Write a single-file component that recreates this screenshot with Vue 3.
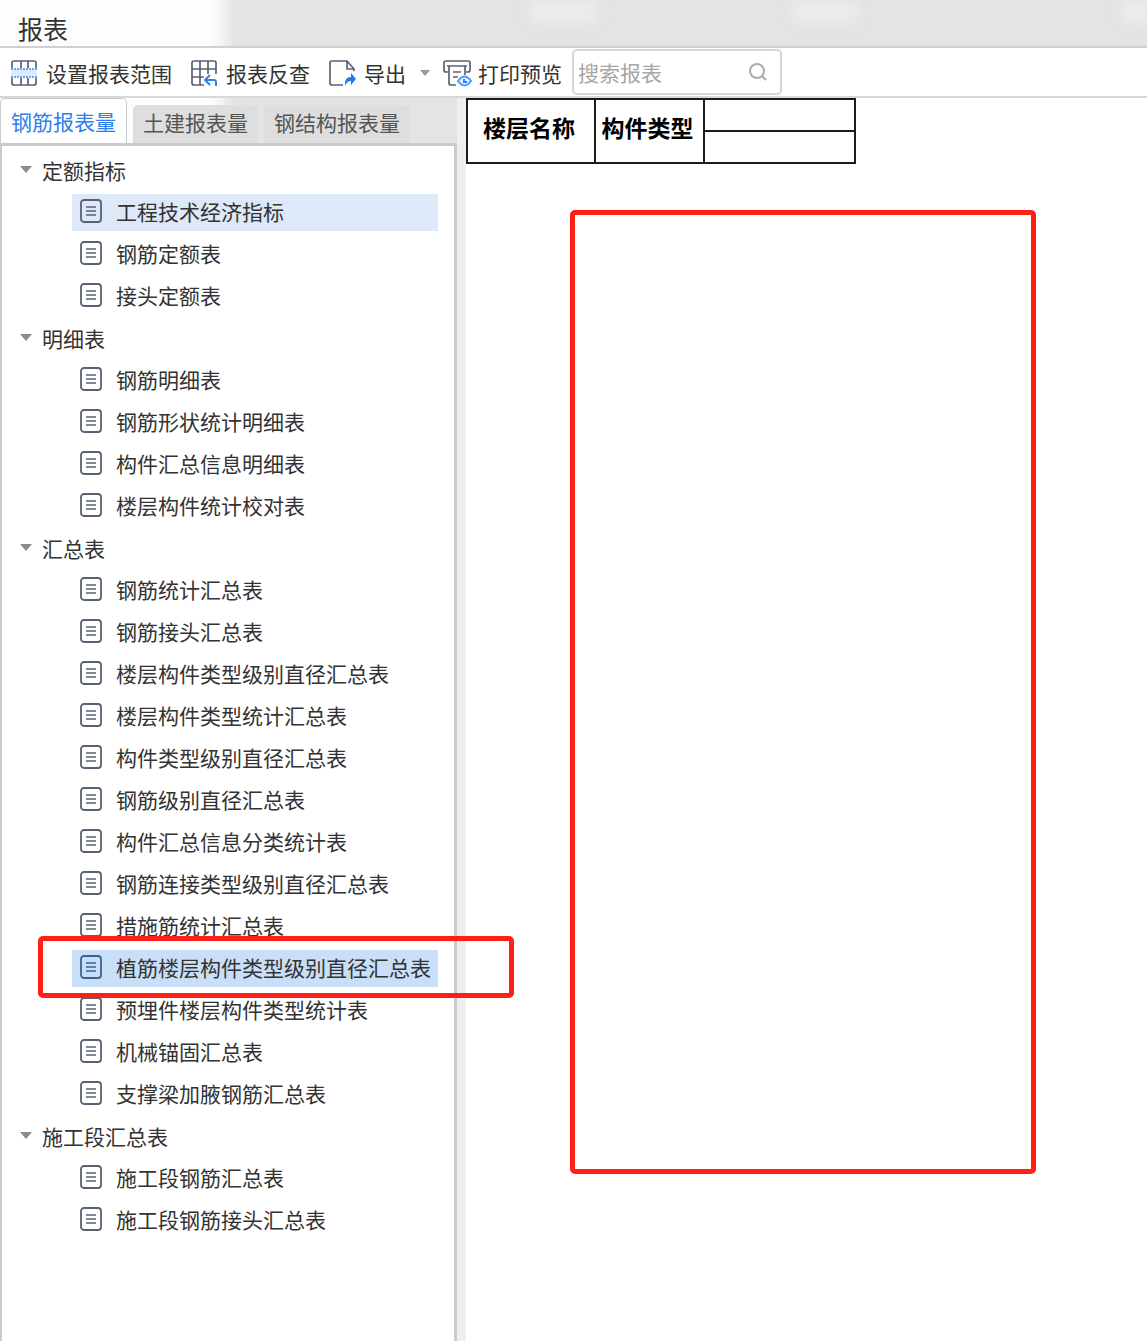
<script setup>
import { ref } from 'vue'

const tabs = ['钢筋报表量', '土建报表量', '钢结构报表量']
const activeTab = ref('钢筋报表量')
const hovered = '工程技术经济指标'
const selected = ref('植筋楼层构件类型级别直径汇总表')
const keyword = ref('')

const groups = [
  { name: '定额指标', items: ['工程技术经济指标', '钢筋定额表', '接头定额表'] },
  { name: '明细表', items: ['钢筋明细表', '钢筋形状统计明细表', '构件汇总信息明细表', '楼层构件统计校对表'] },
  {
    name: '汇总表',
    items: [
      '钢筋统计汇总表',
      '钢筋接头汇总表',
      '楼层构件类型级别直径汇总表',
      '楼层构件类型统计汇总表',
      '构件类型级别直径汇总表',
      '钢筋级别直径汇总表',
      '构件汇总信息分类统计表',
      '钢筋连接类型级别直径汇总表',
      '措施筋统计汇总表',
      '植筋楼层构件类型级别直径汇总表',
      '预埋件楼层构件类型统计表',
      '机械锚固汇总表',
      '支撑梁加腋钢筋汇总表'
    ]
  },
  { name: '施工段汇总表', items: ['施工段钢筋汇总表', '施工段钢筋接头汇总表'] }
]
</script>

<template>
  <div class="window">
    <header class="titlebar">
      <h1>报表</h1>
      <span class="glow glow-a"></span>
      <span class="glow glow-b"></span>
      <span class="glow glow-c"></span>
    </header>

    <div class="toolbar">
      <button type="button" class="tool">
        <svg width="28" height="28" viewBox="0 0 28 28" fill="none">
          <path d="M2 9V4q0-2 2-2h20q2 0 2 2v5M2 19v5q0 2 2 2h20q2 0 2-2v-5M11 2v7M18 2v7M11 19v7M18 19v7" stroke="#5a6273" stroke-width="1.700" />
          <path d="M1 10h26v8H1z" fill="#dcebff" />
          <path d="M1 10h26M1 18h26" stroke="#3d8df5" stroke-width="1.500" stroke-dasharray="2 1" />
        </svg>
        <span>设置报表范围</span>
      </button>
      <button type="button" class="tool">
        <svg width="28" height="28" viewBox="0 0 28 28" fill="none">
          <path d="M14 26H4q-2 0-2-2V4q0-2 2-2h20q2 0 2 2v11M2 10h24M2 18h12M10 2v24M18 2v13" stroke="#5a6273" stroke-width="1.700" />
          <path d="M26 27v-4q0-2-2-2h-8M20 16l-5 5 5 5" stroke="#2f80ee" stroke-width="2" />
        </svg>
        <span>报表反查</span>
      </button>
      <button type="button" class="tool">
        <svg width="28" height="28" viewBox="0 0 28 28" fill="none">
          <path d="M15 26H4q-2 0-2-2V4q0-2 2-2h15l7 8v2M19 2v8h7" stroke="#5a6273" stroke-width="1.700" />
          <path d="M17 27q-1-9 6-9v-4l5 6-5 6v-4q-4 0-6 5z" fill="#1f7cf0" />
        </svg>
        <span>导出</span>
        <svg class="caret" width="10" height="6" viewBox="0 0 10 6"><path d="M0 0h10L5 6z" fill="#999" /></svg>
      </button>
      <button type="button" class="tool">
        <svg width="30" height="28" viewBox="0 0 30 28" fill="none">
          <path d="M6 13H4q-2 0-2-2V4q0-2 2-2h22q2 0 2 2v7q0 2-2 2h-2M5 7h20M7 7v17q0 2 2 2h5M23 7v9M11 13h8M11 18h5" stroke="#5a6273" stroke-width="1.700" />
          <path d="M16 22q6.500-9 13 0q-6.500 9-13 0z" fill="#eaf3ff" stroke="#4a9aff" stroke-width="2" />
          <path d="M22 20v3h3" stroke="#2f80ee" stroke-width="2" />
        </svg>
        <span>打印预览</span>
      </button>
      <div class="search">
        <input v-model="keyword" type="text" placeholder="搜索报表" aria-label="搜索报表" />
        <svg width="20" height="20" viewBox="0 0 20 20" fill="none" stroke="#aaa" stroke-width="2">
          <circle cx="9" cy="9" r="7" />
          <path d="M14 14l4 4" />
        </svg>
      </div>
    </div>

    <div class="body">
      <aside class="sidebar">
        <nav class="tabs">
          <button
            v-for="tab in tabs"
            :key="tab"
            type="button"
            class="tab"
            :class="{ active: tab === activeTab }"
            @click="activeTab = tab"
          >{{ tab }}</button>
        </nav>
        <ul class="tree">
          <li v-for="group in groups" :key="group.name">
            <button type="button" class="group">
              <svg width="12" height="8" viewBox="0 0 12 8"><path d="M0 0h12L6 7z" fill="#8c8c8c" /></svg>
              <span>{{ group.name }}</span>
            </button>
            <ul class="items">
              <li v-for="item in group.items" :key="item" class="row">
                <button
                  type="button"
                  class="item"
                  :class="{ hovered: item === hovered, selected: item === selected }"
                  @click="selected = item"
                >
                  <svg width="22" height="24" viewBox="0 0 22 24" fill="none" stroke="currentColor">
                    <rect x="1" y="1" width="20" height="22" rx="3" stroke-width="1.800" />
                    <path d="M6 8h10M6 12h10M6 16h10" stroke-width="1.600" />
                  </svg>
                  <span>{{ item }}</span>
                </button>
                <span v-if="item === selected" class="mark row-mark"></span>
              </li>
            </ul>
          </li>
        </ul>
      </aside>

      <main class="report">
        <table>
          <colgroup>
            <col class="c-floor" />
            <col class="c-type" />
            <col class="c-value" />
          </colgroup>
          <thead>
            <tr>
              <th rowspan="2" scope="col">楼层名称</th>
              <th rowspan="2" scope="col">构件类型</th>
              <td></td>
            </tr>
            <tr>
              <td></td>
            </tr>
          </thead>
        </table>
        <span class="mark area-mark"></span>
      </main>
    </div>
  </div>
</template>

<style>
body {
  background: #fff;
}
</style>

<style scoped>
.window {
  display: flex;
  flex-direction: column;
  min-height: 100vh;
  color: #333;
  font-family: "Noto Sans CJK SC", sans-serif;
  font-size: 21px;
  line-height: 30px;
}

button {
  box-sizing: border-box;
  margin: 0;
  padding: 0;
  border: 0;
  background: none;
  color: inherit;
  font: inherit;
  white-space: nowrap;
  cursor: pointer;
}

svg {
  display: block;
  flex: none;
}

ul {
  margin: 0;
  padding: 0;
  list-style: none;
}

.titlebar {
  position: relative;
  box-sizing: border-box;
  height: 48px;
  padding: 10px 18px 0;
  overflow: hidden;
  border-bottom: 2px solid #cdd0d4;
  background: linear-gradient(90deg, #fdfdfd 212px, #e4e4e4 234px);
}

h1 {
  margin: 0;
  font-size: 25px;
  font-weight: 400;
  line-height: 36px;
}

.glow {
  position: absolute;
  top: 0;
  width: 70px;
  height: 24px;
  border-radius: 12px;
  background: #ebebeb;
  filter: blur(6px);
}

.glow-a {
  left: 528px;
}

.glow-b {
  left: 790px;
}

.glow-c {
  left: 1120px;
}

.toolbar {
  display: flex;
  align-items: center;
  box-sizing: border-box;
  height: 50px;
  padding-left: 10px;
  border-bottom: 2px solid #d6d8dc;
  background: #fff;
}

.tool {
  display: flex;
  align-items: center;
  gap: 8px;
  margin-right: 18px;
  padding-top: 2px;
}

.caret {
  margin-left: 6px;
}

.tool:nth-child(3) {
  margin-right: 12px;
}

.tool:nth-child(4) {
  gap: 6px;
  margin-right: 10px;
}

.search {
  display: flex;
  align-items: center;
  box-sizing: border-box;
  width: 210px;
  height: 46px;
  padding: 0 12px 0 4px;
  border: 2px solid #d6d6d6;
  border-radius: 5px;
}

.search input {
  flex: 1;
  min-width: 0;
  padding: 0;
  border: 0;
  outline: 0;
  background: none;
  color: #333;
  font: inherit;
}

.search input::placeholder {
  color: #a6a6a6;
  opacity: 1;
}

.body {
  display: flex;
  flex: 1;
}

.sidebar {
  display: flex;
  flex: none;
  flex-direction: column;
  width: 457px;
}

.tabs {
  display: flex;
  align-items: flex-end;
  gap: 6px;
  height: 45px;
  background: linear-gradient(90deg, #fdfdfd 212px, #e4e4e4 234px);
}

.tab {
  height: 38px;
  padding: 0 10px 4px;
  border-radius: 5px 5px 0 0;
  background: #dedede;
  color: #555;
}

.tab.active {
  height: 45px;
  padding-bottom: 0;
  border: 1px solid #c8ccd2;
  border-bottom: 0;
  background: #fff;
  color: #2f80ee;
}

.tree {
  flex: 1;
  padding: 3px 0 20px;
  border: solid #c8cbcf;
  border-width: 3px 3px 0 2px;
  background: #fff;
}

.group {
  display: flex;
  align-items: center;
  gap: 10px;
  height: 42px;
  padding-left: 18px;
}

.row {
  position: relative;
  box-sizing: border-box;
  height: 42px;
  padding: 3px 16px 0 70px;
}

.item {
  display: flex;
  align-items: center;
  gap: 14px;
  width: 100%;
  height: 37px;
  padding: 0 0 4px 8px;
}

.item svg {
  color: #596273;
}

.item.hovered {
  background: #dde8f8;
}

.item.selected {
  background: #c9dff8;
}

.item.selected svg {
  color: #3a6491;
}

.mark {
  position: absolute;
  z-index: 1;
  box-sizing: border-box;
  border: 5px solid #ff2015;
  border-radius: 5px;
  pointer-events: none;
}

.row-mark {
  top: -11px;
  right: -60px;
  left: 36px;
  height: 62px;
}

.report {
  position: relative;
  flex: 1;
  border-left: 9px solid #efefef;
  background: #fff;
}

table {
  width: 390px;
  border-collapse: collapse;
  table-layout: fixed;
  color: #000;
}

.c-floor {
  width: 128px;
}

.c-type {
  width: 109px;
}

th,
td {
  box-sizing: border-box;
  height: 32px;
  padding: 0;
  border: 2px solid #1c1c1c;
}

th {
  padding: 0 4px 8px 0;
  font-size: 23px;
  font-weight: 700;
}

.area-mark {
  top: 112px;
  left: 104px;
  width: 466px;
  height: 964px;
}
</style>
